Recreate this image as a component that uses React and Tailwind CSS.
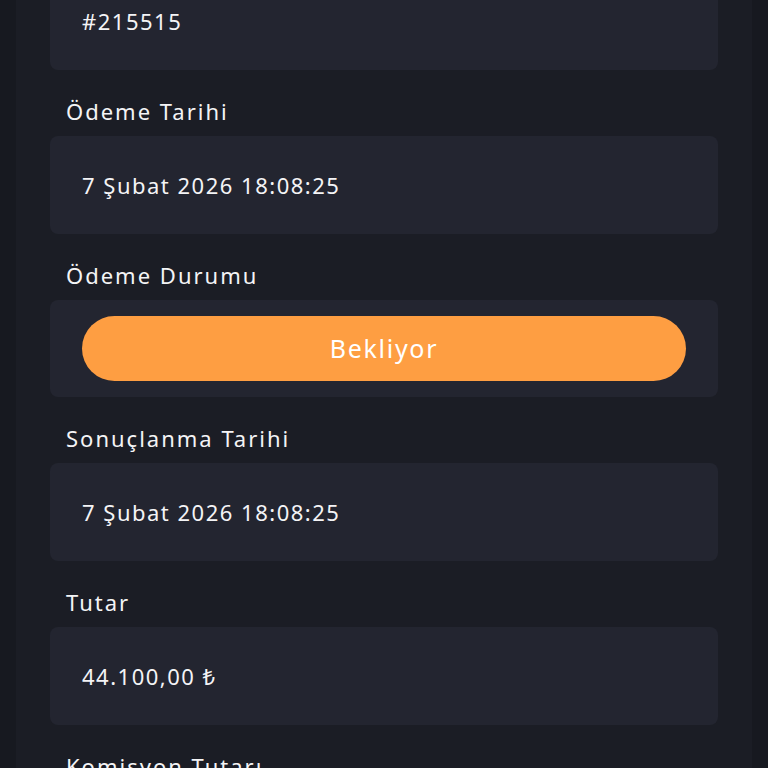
import React from "react";

const rows = [
  { label: null, value: "#215515" },
  { label: "Ödeme Tarihi", value: "7 Şubat 2026 18:08:25" },
  { label: "Ödeme Durumu", status: "Bekliyor" },
  { label: "Sonuçlanma Tarihi", value: "7 Şubat 2026 18:08:25" },
  { label: "Tutar", value: "44.100,00 ₺" },
  { label: "Komisyon Tutarı", value: "441,00 ₺" },
];

export default function App() {
  return (
    <div
      className="w-[768px] h-[768px] overflow-hidden bg-[#171920] text-[#f4f4f6]"
      style={{ fontFamily: '"Noto Sans", "Open Sans", sans-serif' }}
    >
      <div className="mx-4 flex h-full flex-col bg-[#1b1d25] px-[34px]">
        <div className="-mt-[28px] flex flex-col">
          {rows.map((r, i) => (
            <div key={i} className="flex flex-col">
              {r.label && (
                <div className="mt-[26px] mb-[10px] pl-4 text-[22px] leading-[30px] tracking-[2px]">
                  {r.label}
                </div>
              )}
              {r.status ? (
                <div className="rounded-lg bg-[#232530] px-8 py-4">
                  <div className="flex h-[65px] items-center justify-center rounded-full bg-[#fe9e42] text-[25px] tracking-[1.7px] text-white">
                    {r.status}
                  </div>
                </div>
              ) : (
                <div className="rounded-lg bg-[#232530] px-8 py-8 text-[22px] leading-[34px] tracking-[1.5px]">
                  {r.value}
                </div>
              )}
            </div>
          ))}
        </div>
      </div>
    </div>
  );
}
